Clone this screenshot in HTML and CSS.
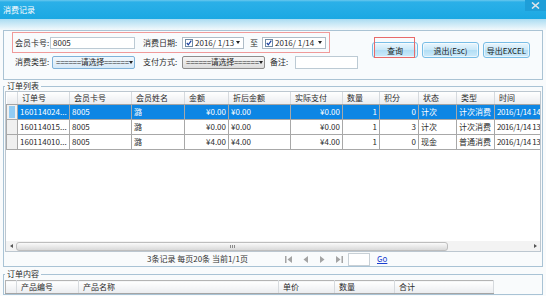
FILE: index.html
```html
<!DOCTYPE html>
<html lang="zh-CN">
<head>
    <meta charset="UTF-8">
    <meta name="viewport" content="width=device-width, initial-scale=1.0">
    <title>消费记录</title>
    <link rel="stylesheet" href="styles.css">
</head>
<body>
<div class="window">
    <div class="titlebar">
        <span class="title">消费记录</span>
        <span class="close">
            <svg width="9" height="7" viewBox="0 0 9 7"><path d="M1 0.5 L8 6.5 M8 0.5 L1 6.5" stroke="#dde5ea" stroke-width="1.6"/></svg>
        </span>
    </div>
    <div class="title-fade"></div>

    <div class="filter-panel">
        <div class="filter-fields">
            <div class="field-row highlight">
                <span class="lbl w35">会员卡号:</span>
                <div class="textbox card-no">8005</div>
                <span class="lbl w39 gap8">消费日期:</span>
                <div class="datepick w62">
                    <svg class="chk" width="8" height="8" viewBox="0 0 8 8"><rect x="0.5" y="0.5" width="7" height="7" fill="#fff" stroke="#6d8aa3"/><path d="M1.8 4 L3.3 5.8 L6.3 1.6" stroke="#1b3f9e" stroke-width="1.2" fill="none"/></svg>
                    <span class="dval">2016/ 1/13</span>
                    <span class="caret"></span>
                </div>
                <span class="to">至</span>
                <div class="datepick w64">
                    <svg class="chk" width="8" height="8" viewBox="0 0 8 8"><rect x="0.5" y="0.5" width="7" height="7" fill="#fff" stroke="#6d8aa3"/><path d="M1.8 4 L3.3 5.8 L6.3 1.6" stroke="#1b3f9e" stroke-width="1.2" fill="none"/></svg>
                    <span class="dval">2016/ 1/14</span>
                    <span class="caret"></span>
                </div>
            </div>
            <div class="field-row second">
                <span class="lbl w37">消费类型:</span>
                <div class="select sel-blue"><span class="sval">======请选择======</span><span class="caret"></span></div>
                <span class="lbl w39 gap8">支付方式:</span>
                <div class="select sel-gray"><span class="sval">======请选择======</span><span class="caret"></span></div>
                <span class="lbl w25 gap5">备注:</span>
                <div class="textbox remark"></div>
            </div>
        </div>
        <div class="actions">
            <button class="btn btn-query">查询<span class="mark"></span></button>
            <button class="btn btn-exit">退出(Esc)</button>
            <button class="btn btn-export">导出EXCEL</button>
        </div>
    </div>

    <fieldset class="group orders">
        <legend>订单列表</legend>
        <div class="grid">
            <table class="list">
                <colgroup>
                    <col class="c-rh"><col class="c-no"><col class="c-card"><col class="c-name"><col class="c-amt">
                    <col class="c-disc"><col class="c-paid"><col class="c-qty"><col class="c-pts"><col class="c-st">
                    <col class="c-type"><col class="c-time">
                </colgroup>
                <tr>
                    <th></th><th>订单号</th><th>会员卡号</th><th>会员姓名</th><th>金额</th><th>折后金额</th>
                    <th>实际支付</th><th>数量</th><th>积分</th><th>状态</th><th>类型</th><th>时间</th>
                </tr>
                <tr class="sel">
                    <td class="rh"><span class="cur"></span></td><td>160114024...</td><td>8005</td><td>潞</td>
                    <td class="num">¥0.00</td><td>¥0.00</td><td class="num">¥0.00</td><td class="num">1</td>
                    <td class="num">0</td><td>计次</td><td>计次消费</td><td class="time">2016/1/14 14</td>
                </tr>
                <tr>
                    <td class="rh"></td><td>160114015...</td><td>8005</td><td>潞</td>
                    <td class="num">¥0.00</td><td>¥0.00</td><td class="num">¥0.00</td><td class="num">1</td>
                    <td class="num">3</td><td>计次</td><td>计次消费</td><td class="time">2016/1/14 13</td>
                </tr>
                <tr>
                    <td class="rh"></td><td>160114010...</td><td>8005</td><td>潞</td>
                    <td class="num">¥4.00</td><td>¥4.00</td><td class="num">¥4.00</td><td class="num">1</td>
                    <td class="num">0</td><td>现金</td><td>普通消费</td><td class="time">2016/1/14 13</td>
                </tr>
            </table>
            <div class="grid-fill"></div>
            <div class="hscroll">
                <span class="sb-arrow sb-left"></span>
                <span class="sb-thumb"><span class="grip"></span></span>
                <span class="sb-track"></span>
                <span class="sb-arrow sb-right"></span>
            </div>
        </div>
        <div class="pager">
            <span class="pager-info">3条记录 每页20条 当前1/1页</span>
            <span class="pager-nav">
                <svg width="7" height="7" viewBox="0 0 7 7"><rect x="0" y="0" width="1.5" height="7" fill="#a4a4a4"/><path d="M7 0 L2.5 3.5 L7 7 Z" fill="#a4a4a4"/></svg>
                <svg width="7" height="7" viewBox="0 0 7 7"><path d="M6 0 L1.5 3.5 L6 7 Z" fill="#a4a4a4"/></svg>
                <svg width="7" height="7" viewBox="0 0 7 7"><path d="M1 0 L5.5 3.5 L1 7 Z" fill="#a4a4a4"/></svg>
                <svg width="7" height="7" viewBox="0 0 7 7"><path d="M0 0 L4.5 3.5 L0 7 Z" fill="#a4a4a4"/><rect x="5.5" y="0" width="1.5" height="7" fill="#a4a4a4"/></svg>
            </span>
            <span class="page-input"></span>
            <a class="go" href="#">Go</a>
        </div>
    </fieldset>

    <fieldset class="group items">
        <legend>订单内容</legend>
        <table class="item-head">
            <colgroup>
                <col class="c-rh"><col class="c-pno"><col class="c-pname"><col class="c-price"><col class="c-pqty"><col class="c-sum">
            </colgroup>
            <tr>
                <th></th><th>产品编号</th><th>产品名称</th><th>单价</th><th>数量</th><th>合计</th>
            </tr>
        </table>
    </fieldset>
</div>
</body>
</html>
```

FILE: styles.css
```css
* { box-sizing: border-box; }
body {
    margin: 0;
    font-family: "Noto Sans CJK SC", "Liberation Sans", sans-serif;
    font-size: 8px;
    line-height: 10px;
    color: #2a2a2a;
    background: #f9fbfc;
}
.window {
    width: 546px;
    height: 296px;
    overflow: hidden;
    background: #f9fbfc;
}

/* title bar */
.titlebar {
    height: 19px;
    display: flex;
    align-items: center;
    padding-left: 3px;
    background: linear-gradient(#6ac8ee 0, #2bb0e8 2px, #1ba8e3 100%);
    color: #fff;
}
.close {
    margin-left: auto;
    align-self: flex-start;
    width: 21px;
    height: 11px;
    display: flex;
    align-items: center;
    justify-content: center;
    background: #1e9ed8;
}
.title-fade {
    height: 11px;
    background: linear-gradient(#aadcf2, #f3f9fc);
}

/* filter panel */
.filter-panel {
    margin: 0 3px;
    height: 50px;
    border: 1px solid #aac3d4;
    background: #f8fbfd;
    display: flex;
}
.filter-fields { margin-left: 8px; padding-top: 1px; }
.field-row { display: flex; align-items: center; }
.highlight {
    width: 318px;
    height: 21px;
    border: 1px solid #f09a9a;
    padding-left: 2px;
}
.second { height: 14px; margin-top: 2px; padding-left: 3px; }
.lbl { flex: none; color: #2a2a2a; white-space: nowrap; }
.w35 { width: 35px; }
.w37 { width: 37px; }
.w39 { width: 39px; }
.w25 { width: 25px; }
.gap8 { margin-left: 8px; }
.gap5 { margin-left: 5px; }
.to { width: 12px; margin-left: 6px; flex: none; }

.textbox {
    flex: none;
    background: #fff;
    border: 1px solid #bccad4;
    padding-left: 2px;
    white-space: nowrap;
}
.card-no { width: 85px; height: 12px; line-height: 10px; }
.remark { width: 63px; height: 13px; }

.datepick {
    flex: none;
    height: 12px;
    display: flex;
    align-items: center;
    padding: 0 3px 0 2px;
    background: #fff;
    border: 1px solid #aebcc7;
}
.w62 { width: 62px; }
.w64 { width: 64px; }
.chk { flex: none; margin-right: 2px; }
.dval { flex: 1; white-space: nowrap; }
.caret {
    flex: none;
    width: 0;
    height: 0;
    border-left: 2.5px solid transparent;
    border-right: 2.5px solid transparent;
    border-top: 3px solid #222;
}

.select {
    flex: none;
    width: 83px;
    height: 13px;
    display: flex;
    align-items: center;
    padding: 0 4px 0 3px;
    border: 1px solid;
    border-radius: 2px;
}
.sval { flex: 1; white-space: nowrap; letter-spacing: -0.3px; }
.sel-blue { border-color: #7fb2d9; background: linear-gradient(#f1f8fd, #d6e9f8); }
.sel-gray { border-color: #8c8c8c; background: linear-gradient(#f6f6f6, #dcdcdc); }

/* buttons */
.actions {
    display: flex;
    gap: 4px;
    margin-left: 14px;
    margin-top: 11px;
    align-self: flex-start;
}
.btn {
    position: relative;
    height: 16px;
    padding: 0;
    font-family: inherit;
    font-size: 8px;
    color: #1a1a1a;
    border: 1px solid #78bde6;
    border-radius: 3px;
    background: linear-gradient(#eaf6fd, #c8e8f9 50%, #b2def5 51%, #cdeafa);
    box-shadow: inset 0 0 0 1px rgba(255,255,255,0.6);
}
.btn-query { width: 46px; }
.btn-exit { width: 57px; }
.btn-export { width: 47px; }
.mark {
    position: absolute;
    left: 1px;
    right: 2px;
    top: -6px;
    bottom: -1px;
    border: 1px solid #e86a6a;
}

/* group boxes */
.group {
    margin: 1px 3px 0;
    padding: 0 1px;
    border: 1px solid #a9c3d5;
    min-width: 0;
}
.group legend {
    padding: 0 2px;
    line-height: 10px;
    color: #2a2a2a;
}
.items { margin-top: 2px; }

/* order grid */
.grid {
    height: 161px;
    border: 1px solid #bcc7d0;
    background: #fff;
    display: flex;
    flex-direction: column;
    overflow: hidden;
}
.list {
    flex: none;
    border-collapse: collapse;
    table-layout: fixed;
    width: 547px;
}
.c-rh { width: 11px; }
.c-no { width: 52px; }
.c-card { width: 62px; }
.c-name { width: 53px; }
.c-amt { width: 44px; }
.c-disc { width: 62px; }
.c-paid { width: 52px; }
.c-qty { width: 37px; }
.c-pts { width: 39px; }
.c-st { width: 38px; }
.c-type { width: 38px; }
.c-time { width: 60px; }
.list th, .item-head th {
    font-weight: normal;
    text-align: left;
    padding: 0 0 0 4px;
    white-space: nowrap;
    overflow: hidden;
    background: linear-gradient(#ffffff, #eaecef);
    border-right: 1px solid #d6dade;
    border-bottom: 1px solid #a4a4a4;
}
.list th { height: 12px; }
.list td {
    height: 15px;
    padding: 0 2px;
    border: 1px solid #a8a8a8;
    white-space: nowrap;
    overflow: hidden;
}
.list td.num { text-align: right; }
.list td.time { letter-spacing: -0.4px; }
.list td.rh { background: #f0f0f0; padding: 0; }
.list tr.sel td { background: #0d86e4; color: #fff; }
.list tr.sel td.rh { background: #f0f0f0; padding: 0 2px; }
.cur { display: block; width: 6px; height: 12px; background: #92ccf3; }

.grid-fill { flex: 1; }
.hscroll {
    flex: none;
    height: 10px;
    display: flex;
    align-items: center;
    background: #f3f3f3;
}
.sb-arrow { flex: none; width: 10px; display: flex; justify-content: center; }
.sb-left::before {
    content: "";
    border-top: 2px solid transparent;
    border-bottom: 2px solid transparent;
    border-right: 3px solid #555;
}
.sb-right::before {
    content: "";
    border-top: 2px solid transparent;
    border-bottom: 2px solid transparent;
    border-left: 3px solid #555;
}
.sb-thumb {
    flex: none;
    width: 432px;
    height: 9px;
    border: 1px solid #bdbdbd;
    border-radius: 3px;
    background: linear-gradient(#fafafa, #d9d9d9);
    display: flex;
    align-items: center;
    justify-content: center;
}
.grip {
    width: 5px;
    height: 3px;
    background: repeating-linear-gradient(90deg, #8a8a8a 0 1px, transparent 1px 2px);
}
.sb-track { flex: 1; }

.pager {
    height: 14px;
    display: flex;
    align-items: center;
}
.pager-info {
    width: 138px;
    margin-left: 142px;
    flex: none;
    white-space: nowrap;
    color: #333;
}
.pager-nav { display: flex; gap: 10px; }
.page-input {
    width: 22px;
    height: 13px;
    margin-left: 5px;
    border: 1px solid #c8d0d6;
    background: #fff;
}
.go { margin-left: 7px; color: #1a3fd0; text-decoration: underline; }

/* item grid header */
.item-head {
    margin-top: 1px;
    border-collapse: collapse;
    table-layout: fixed;
    width: 489px;
    border: 1px solid #b4b4b4;
}
.item-head th { height: 13px; }
.c-pno { width: 62px; }
.c-pname { width: 200px; }
.c-price { width: 56px; }
.c-pqty { width: 60px; }
.c-sum { width: 99px; }
```
